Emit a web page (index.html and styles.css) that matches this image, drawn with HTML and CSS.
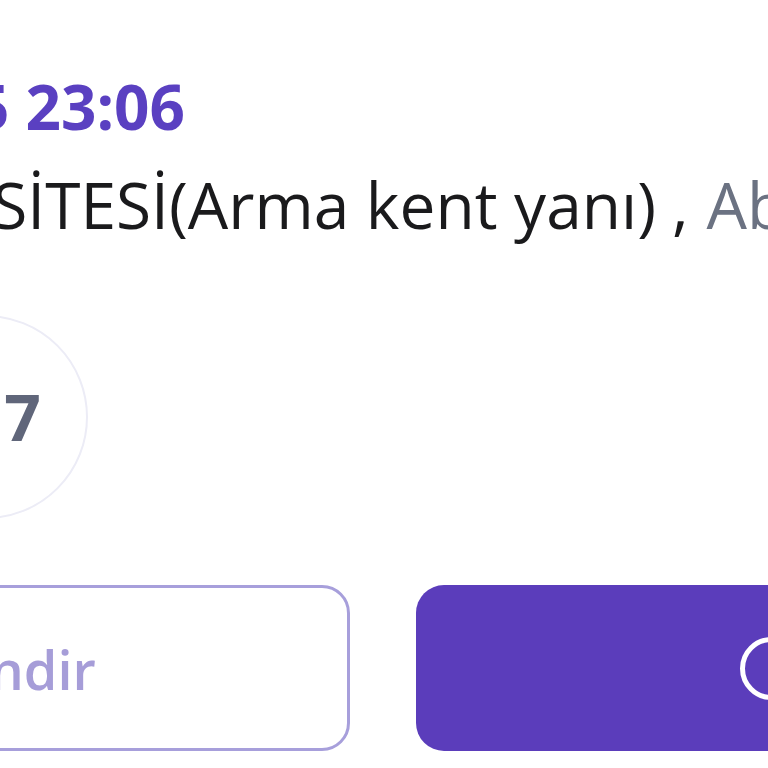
FILE: index.html
```html
<!DOCTYPE html>
<html lang="tr">
<head>
<meta charset="utf-8">
<title>Sipariş</title>
<link rel="stylesheet" href="styles.css">
</head>
<body>
  <main class="card">
    <div class="when"><span>05.06.2025 23:06</span></div>
    <div class="place">
      <div class="place-name"><span>YILDIZ KENT SİTESİ(Arma kent yanı)</span></div>
      <span class="sep">,</span>
      <span class="district">Abdurrahmangazi</span>
    </div>
    <div class="stats">
      <div class="count">117</div>
    </div>
    <div class="actions">
      <button class="btn btn-outline" type="button">Yönlendir</button>
      <button class="btn btn-solid" type="button" aria-label="Yükleniyor"><span class="spinner"></span></button>
    </div>
  </main>
</body>
</html>
```

FILE: styles.css
```css
html, body {
  margin: 0;
  padding: 0;
  background: #ffffff;
  overflow: hidden;
}

body {
  font-family: "Open Sans", "Noto Sans", sans-serif;
  width: 768px;
  height: 768px;
}

.card {
  display: flex;
  flex-direction: column;
  margin-left: -410px;
  padding-top: 75px;
  width: 1700px;
}

/* date & time line */
.when {
  display: flex;
  justify-content: flex-end;
  width: 595px;
  font-size: 62px;
  font-weight: 700;
  line-height: 1;
  color: #5a40c1;
  white-space: nowrap;
}

/* address line */
.place {
  display: flex;
  align-items: baseline;
  margin-top: 36px;
  font-size: 64px;
  font-weight: 500;
  line-height: 1;
  white-space: nowrap;
  color: #1a1a1c;
}

.place-name {
  display: flex;
  justify-content: flex-end;
  flex: 0 0 1066px;
}

.sep {
  margin-left: 16px;
}

.district {
  margin-left: 18px;
  color: #6b7282;
}

/* counter badge */
.stats {
  display: flex;
  padding-left: 294px;
  margin-top: 78px;
}

.count {
  width: 200px;
  height: 200px;
  border: 2px solid #ececf6;
  border-radius: 50%;
  display: flex;
  align-items: center;
  justify-content: center;
  font-size: 64px;
  font-weight: 700;
  line-height: 1;
  color: #60667a;
}

/* action buttons */
.actions {
  display: grid;
  grid-template-columns: 760px 710px;
  column-gap: 66px;
  margin-top: 66px;
}

.btn {
  height: 166px;
  border-radius: 28px;
  display: flex;
  align-items: center;
  justify-content: center;
  font-family: "Open Sans", "Noto Sans", sans-serif;
  font-size: 54px;
  font-weight: 600;
  padding: 0;
  cursor: pointer;
}

.btn-outline {
  background: #ffffff;
  border: 3px solid #a79fdb;
  color: #a69dd8;
  padding-top: 2px;
}

.btn-solid {
  background: #5b3dbb;
  border: none;
  color: #ffffff;
}

.spinner {
  width: 53px;
  height: 53px;
  border: 5px solid #ffffff;
  border-radius: 50%;
}
```
